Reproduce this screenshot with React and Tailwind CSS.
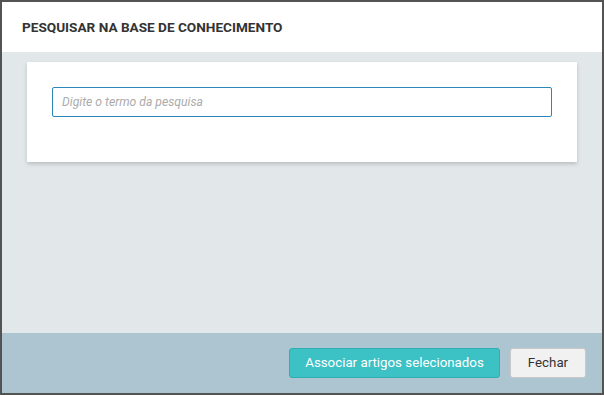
import React, { useState } from "react";

export default function App() {
  const [term, setTerm] = useState("");

  return (
    <div
      className="w-[604px] h-[395px] bg-[#535353] p-[2px]"
      style={{ fontFamily: "Roboto, 'Liberation Sans', sans-serif" }}
    >
      <div className="w-full h-full flex flex-col">
        {/* header */}
        <div className="h-[50px] bg-white flex items-center px-[20px] shrink-0">
          <h1 className="text-[13.6px] font-bold uppercase text-[#333]">
            Pesquisar na base de conhecimento
          </h1>
        </div>

        {/* body */}
        <div className="flex-1 bg-[#e2e7ea] px-[25px] pt-[10px]">
          <div className="bg-white h-[100px] p-[25px] shadow-[0_2px_4px_rgba(0,0,0,0.18)]">
            <input
              autoFocus
              value={term}
              onChange={(e) => setTerm(e.target.value)}
              placeholder="Digite o termo da pesquisa"
              className="w-full h-[30px] border border-[#2a87b7] rounded-[2px] px-[9px] text-[12.2px] text-[#333] outline-none placeholder:italic placeholder:text-[#ababab]"
            />
          </div>
        </div>

        {/* footer */}
        <div className="h-[60px] bg-[#adc5d1] flex items-center justify-end gap-[10px] pr-[16px] shrink-0">
          <button className="h-[30px] w-[211px] rounded-[3px] bg-[#3cc1c5] border border-[#30aeb2] text-white text-[13.3px]">
            Associar artigos selecionados
          </button>
          <button className="h-[30px] w-[76px] rounded-[3px] bg-[#f1f1f1] border border-[#c9c9c9] text-[#333] text-[13.3px]">
            Fechar
          </button>
        </div>
      </div>
    </div>
  );
}
